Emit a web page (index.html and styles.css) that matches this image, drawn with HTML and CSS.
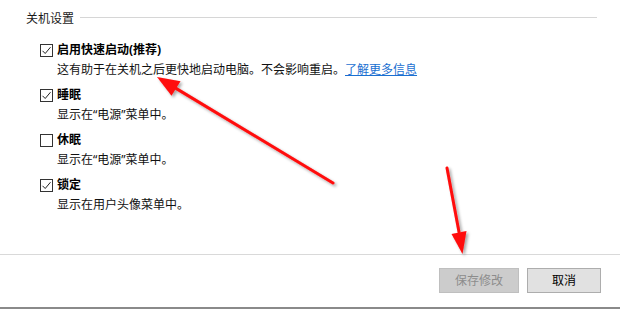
FILE: index.html
```html
<!DOCTYPE html>
<html lang="zh-CN">
<head>
<meta charset="utf-8">
<title>关机设置</title>
<link rel="stylesheet" href="styles.css">
</head>
<body>
<div class="page">
  <div class="content">
    <div class="group-title">
      <span class="title-text">关机设置</span>
      <span class="title-line"></span>
    </div>
    <div class="options">
      <div class="option">
        <div class="label-row">
          <span class="checkbox"><svg viewBox="0 0 13 13" width="13" height="13"><path d="M2.5 6.8 L5.2 9.5 L10.5 3.2" fill="none" stroke="#222" stroke-width="1"/></svg></span>
          <span class="label">启用快速启动(推荐)</span>
        </div>
        <div class="desc">这有助于在关机之后更快地启动电脑。不会影响重启。<a class="link" href="#">了解更多信息</a></div>
      </div>
      <div class="option">
        <div class="label-row">
          <span class="checkbox"><svg viewBox="0 0 13 13" width="13" height="13"><path d="M2.5 6.8 L5.2 9.5 L10.5 3.2" fill="none" stroke="#222" stroke-width="1"/></svg></span>
          <span class="label">睡眠</span>
        </div>
        <div class="desc">显示在“电源”菜单中。</div>
      </div>
      <div class="option">
        <div class="label-row">
          <span class="checkbox"></span>
          <span class="label">休眠</span>
        </div>
        <div class="desc">显示在“电源”菜单中。</div>
      </div>
      <div class="option">
        <div class="label-row">
          <span class="checkbox"><svg viewBox="0 0 13 13" width="13" height="13"><path d="M2.5 6.8 L5.2 9.5 L10.5 3.2" fill="none" stroke="#222" stroke-width="1"/></svg></span>
          <span class="label">锁定</span>
        </div>
        <div class="desc">显示在用户头像菜单中。</div>
      </div>
    </div>
  </div>
  <div class="footer">
    <button class="btn btn-disabled" disabled>保存修改</button>
    <button class="btn btn-cancel">取消</button>
  </div>
  <svg class="arrows" viewBox="0 0 620 309" width="620" height="309">
    <defs>
      <filter id="sh" x="-20%" y="-20%" width="140%" height="140%">
        <feDropShadow dx="2" dy="2" stdDeviation="1.5" flood-color="#000" flood-opacity="0.35"/>
      </filter>
    </defs>
    <g filter="url(#sh)" fill="#ff0a0a" stroke="#ff0a0a">
      <line x1="333" y1="183" x2="176" y2="88.4" stroke-width="3" stroke-linecap="round"/>
      <polygon points="157,77 180.5,81.2 171.5,95.8" stroke="none"/>
      <line x1="447" y1="168" x2="459" y2="232" stroke-width="3" stroke-linecap="round"/>
      <polygon points="462.5,254 466.5,231 451.5,234" stroke="none"/>
    </g>
  </svg>
</div>
</body>
</html>
```
FILE: styles.css
```css
* { box-sizing: border-box; }
html, body {
  margin: 0;
  padding: 0;
  background: #ffffff;
}
body {
  font-family: "Noto Sans", "Noto Sans CJK SC", sans-serif;
  font-size: 12px;
  color: #111;
}
.page {
  position: relative;
  width: 620px;
  height: 309px;
  overflow: hidden;
  display: flex;
  flex-direction: column;
  background: #fff;
}
.content {
  flex: 0 0 254px;
  padding: 9px 23px 0 26px;
}
.group-title {
  display: flex;
  align-items: center;
  height: 20px;
}
.title-text {
  line-height: 20px;
  color: #1a1a1a;
}
.title-line {
  flex: 1;
  height: 1px;
  background: #d6d6d6;
  margin-left: 6px;
  margin-top: -4px;
}
.options {
  margin-top: 11px;
  padding-left: 14px;
  display: flex;
  flex-direction: column;
  gap: 5px;
}
.option {
  display: flex;
  flex-direction: column;
}
.label-row {
  display: flex;
  align-items: center;
  height: 20px;
}
.checkbox {
  width: 13px;
  height: 13px;
  border: 1px solid #333;
  background: #fff;
  margin-right: 4px;
  position: relative;
  flex: 0 0 13px;
}
.checkbox svg {
  position: absolute;
  left: -1px;
  top: -1px;
}
.label {
  font-weight: bold;
  line-height: 20px;
  color: #000;
}
.desc {
  line-height: 20px;
  padding-left: 17px;
  color: #111;
}
.link {
  color: #1a6fd1;
  text-decoration: underline;
}
.footer {
  flex: 1;
  border-top: 1px solid #d9d9d9;
  border-bottom: 2px solid #8a8a8a;
  display: flex;
  justify-content: flex-end;
  align-items: flex-start;
  padding: 13px 19px 0 0;
  gap: 8px;
}
.btn {
  height: 25px;
  font-family: "Noto Sans", "Noto Sans CJK SC", sans-serif;
  font-size: 12px;
  line-height: 20px;
  padding: 0;
}
.btn-disabled {
  width: 80px;
  background: #cccccc;
  border: 1px solid #bfbfbf;
  color: #8c8c8c;
}
.btn-cancel {
  width: 74px;
  background: #e1e1e1;
  border: 1px solid #adadad;
  color: #000;
}
.arrows {
  position: absolute;
  left: 0;
  top: 0;
  pointer-events: none;
}
```
